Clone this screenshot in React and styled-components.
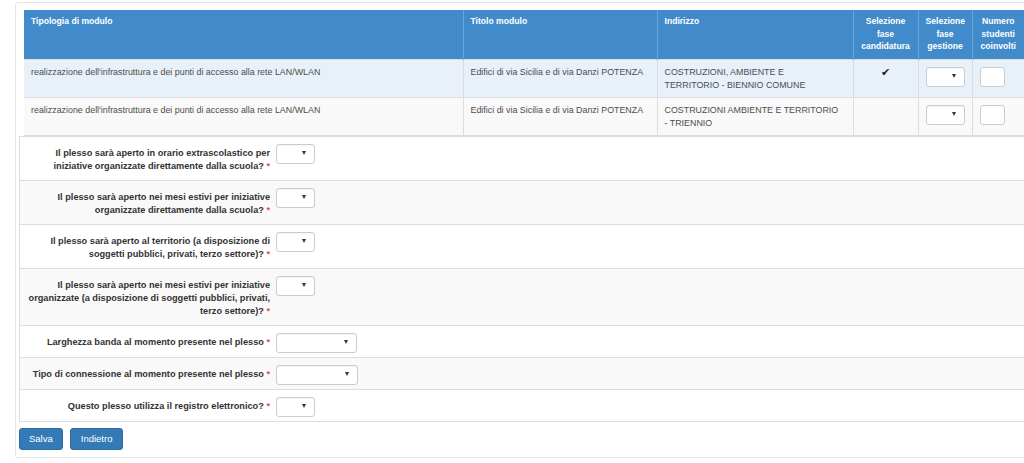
import styled, { createGlobalStyle } from "styled-components"

const Global = createGlobalStyle`
    html, body {
        margin: 0;
        padding: 0;
        background: #fff;
        overflow: hidden;
    }
    body {
        font-family: "Liberation Sans", Arial, sans-serif;
        color: #333;
    }
`

const Panel = styled.div`
    margin: 2px 0 0 15px;
    width: 1040px;
    border: 1px solid #e3e3e3;
    border-radius: 3px;
    padding: 7px 0 7px 3px;
`

const TableWrap = styled.div`
    margin-left: 5px;
`

const Table = styled.table`
    width: 1000px;
    table-layout: fixed;
    border-collapse: collapse;
    font-size: 8.9px;
    line-height: 13px;
`

const Th = styled.th`
    background: #428bca;
    color: #fff;
    font-weight: bold;
    font-size: 8.6px;
    line-height: 12.5px;
    text-align: ${props => props.center ? "center" : "left"};
    vertical-align: top;
    padding: 5px 7px 6px;
    border-left: 1px solid #6da5d8;
    &:first-child { border-left: none; }
`

const Tr = styled.tr`
    background: ${props => props.active ? "#e8f0f9" : "#f9f9f9"};
    border-top: 1px solid #dddddd;
    &:last-child { border-bottom: 1px solid #dddddd; }
`

const Td = styled.td`
    color: #4d4d4d;
    vertical-align: top;
    padding: 6px 7px 5px;
    text-align: ${props => props.center ? "center" : "left"};
    border-left: 1px solid #dddddd;
    &:first-child { border-left: none; }
`

const Line = styled.div`
    white-space: nowrap;
`

const Check = styled.span`
    font-family: "DejaVu Sans", sans-serif;
    font-size: 11px;
    color: #222;
    line-height: 13px;
`

const SelectBox = styled.div`
    width: ${props => props.w || 39}px;
    height: 20px;
    box-sizing: border-box;
    background: #fff;
    border: 1px solid #cccccc;
    border-radius: 3px;
    box-shadow: inset 0 1px 1px rgba(0, 0, 0, 0.05);
    display: flex;
    align-items: center;
    justify-content: flex-end;
    padding-right: 8px;
    margin-top: ${props => props.top || 0}px;
    &::after {
        content: "";
        border-left: 2.5px solid transparent;
        border-right: 2.5px solid transparent;
        border-top: 4px solid #333;
        margin-top: -2px;
    }
`

const NumInput = styled.div`
    width: 25px;
    height: 20px;
    box-sizing: border-box;
    background: #fff;
    border: 1px solid #cccccc;
    border-radius: 3px;
    margin-top: 1px;
`

const Form = styled.div`
    border-left: 1px solid #dddddd;
    border-bottom: 1px solid #dddddd;
`

const Row = styled.div`
    display: flex;
    align-items: flex-start;
    min-height: 31px;
    border-top: 1px solid #dddddd;
    background: ${props => props.striped ? "#f9f9f9" : "#fff"};
`

const Label = styled.div`
    width: 256px;
    box-sizing: border-box;
    padding: 10px 6px 7px 4px;
    text-align: right;
    font-weight: bold;
    font-size: 9.2px;
    line-height: 13px;
    color: #333;
`

const Req = styled.span`
    color: #d9534f;
`

const Buttons = styled.div`
    display: flex;
    gap: 7px;
    margin-top: 6px;
`

const Button = styled.button`
    height: 22px;
    padding: 0 ${props => props.px || 9}px;
    background: #337ab7;
    border: 1px solid #2e6da4;
    border-radius: 3px;
    color: #fff;
    font-family: "Liberation Sans", Arial, sans-serif;
    font-size: 9.5px;
`

const rows = [
    {
        tip: "realizzazione dell'infrastruttura e dei punti di accesso alla rete LAN/WLAN",
        titolo: "Edifici di via Sicilia e di via Danzi POTENZA",
        indirizzo: ["COSTRUZIONI, AMBIENTE E", "TERRITORIO - BIENNIO COMUNE"],
        checked: true,
    },
    {
        tip: "realizzazione dell'infrastruttura e dei punti di accesso alla rete LAN/WLAN",
        titolo: "Edifici di via Sicilia e di via Danzi POTENZA",
        indirizzo: ["COSTRUZIONI AMBIENTE E TERRITORIO", "- TRIENNIO"],
        checked: false,
    },
]

const questions = [
    { text: "Il plesso sarà aperto in orario extrascolastico per iniziative organizzate direttamente dalla scuola?", w: 39 },
    { text: "Il plesso sarà aperto nei mesi estivi per iniziative organizzate direttamente dalla scuola?", w: 39 },
    { text: "Il plesso sarà aperto al territorio (a disposizione di soggetti pubblici, privati, terzo settore)?", w: 39 },
    { text: "Il plesso sarà aperto nei mesi estivi per iniziative organizzate (a disposizione di soggetti pubblici, privati, terzo settore)?", w: 39 },
    { text: "Larghezza banda al momento presente nel plesso", w: 81 },
    { text: "Tipo di connessione al momento presente nel plesso", w: 82 },
    { text: "Questo plesso utilizza il registro elettronico?", w: 39 },
]

const App = () => {
    return (
        <>
            <Global />
            <Panel>
                <TableWrap>
                    <Table>
                        <colgroup>
                            <col style={{ width: 439 }} />
                            <col style={{ width: 194 }} />
                            <col style={{ width: 196 }} />
                            <col style={{ width: 65 }} />
                            <col style={{ width: 54 }} />
                            <col style={{ width: 52 }} />
                        </colgroup>
                        <thead>
                            <tr>
                                <Th>Tipologia di modulo</Th>
                                <Th>Titolo modulo</Th>
                                <Th>Indirizzo</Th>
                                <Th center>Selezione fase candidatura</Th>
                                <Th center>Selezione fase gestione</Th>
                                <Th center>Numero studenti coinvolti</Th>
                            </tr>
                        </thead>
                        <tbody>
                            {rows.map((r, i) => (
                                <Tr key={i} active={i === 0}>
                                    <Td>{r.tip}</Td>
                                    <Td>{r.titolo}</Td>
                                    <Td>{r.indirizzo.map(l => <Line key={l}>{l}</Line>)}</Td>
                                    <Td center>{r.checked && <Check>✔</Check>}</Td>
                                    <Td><SelectBox top={1} /></Td>
                                    <Td><NumInput /></Td>
                                </Tr>
                            ))}
                        </tbody>
                    </Table>
                </TableWrap>
                <Form>
                    {questions.map((q, i) => (
                        <Row key={i} striped={i % 2 === 1}>
                            <Label>{q.text}&nbsp;<Req>*</Req></Label>
                            <SelectBox w={q.w} top={7} />
                        </Row>
                    ))}
                </Form>
                <Buttons>
                    <Button px={9}>Salva</Button>
                    <Button px={10}>Indietro</Button>
                </Buttons>
            </Panel>
        </>
    )
}

export default App
